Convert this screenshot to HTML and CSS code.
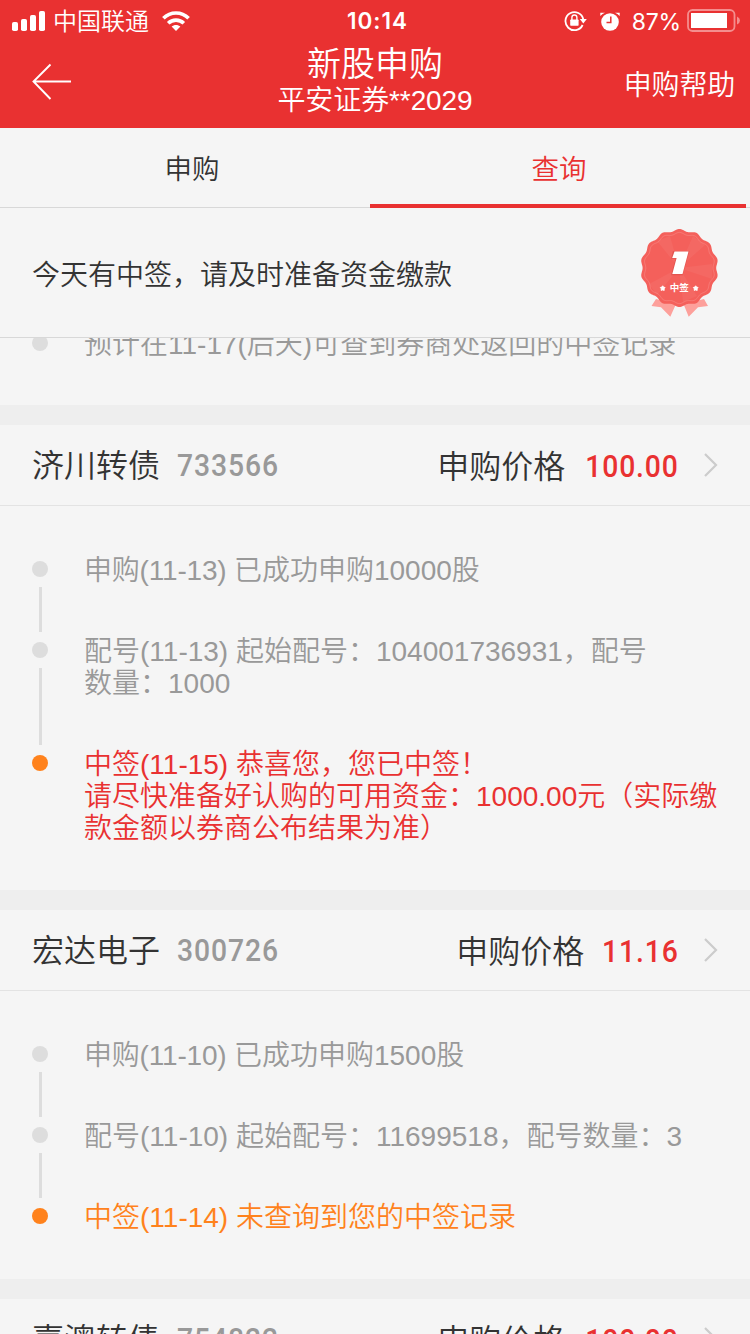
FILE: index.html
```html
<!DOCTYPE html>
<html lang="zh-CN">
<head>
<meta charset="utf-8">
<title>新股申购</title>
<link rel="stylesheet" href="styles.css">
</head>
<body>
<div class="screen">
  <header class="header">
    <div class="status">
      <div class="status-left">
        <svg class="signal" width="34" height="20" viewBox="0 0 34 20" fill="#fff"><rect x="0" y="11" width="6" height="9" rx="1.8"/><rect x="9" y="8" width="6" height="12" rx="1.8"/><rect x="18" y="4" width="6" height="16" rx="1.8"/><rect x="27" y="0" width="6" height="20" rx="1.8"/></svg>
        <span class="carrier">中国联通</span>
        <svg class="wifi" width="28" height="20" viewBox="0 0 28 20" fill="none" stroke="#fff" stroke-width="3.7"><path d="M1.4 7.3C8.5.2 19.500.2 26.600 7.300"/><path d="M6.200 12.200C10.500 8 17.500 8 21.800 12.200"/><path d="M14 20l-4.400-4.400C12 13.300 16 13.300 18.400 15.600z" fill="#fff" stroke="none"/></svg>
      </div>
      <span class="time">10:14</span>
      <div class="status-right">
        <svg class="lock" width="24" height="22" viewBox="0 0 24 22"><path d="M18.600 15A9 9 0 1 1 19.300 9.500" fill="none" stroke="#fff" stroke-width="1.800"/><path d="M15.800 9h7l-3.500 4.500z" fill="#fff"/><rect x="6.200" y="9.500" width="8.400" height="6.200" rx=".7" fill="#fff"/><path d="M7.900 10V7.500a2.500 2.500 0 0 1 5 0V10" fill="none" stroke="#fff" stroke-width="1.400"/></svg>
        <svg class="alarm" width="20" height="20" viewBox="0 0 20 20"><circle cx="10" cy="11" r="8.800" fill="#fff"/><path d="M.3 5V1.800H5Q2.500 2.800.3 5zM19.700 5V1.800H15Q17.500 2.800 19.700 5z" fill="#fff"/><path d="M10.800 5.500v6H6.500" fill="none" stroke="#e93131" stroke-width="1.500"/></svg>
        <span class="percent">87%</span>
        <svg class="battery" width="54" height="24" viewBox="0 0 54 24"><rect x="1" y="1" width="46.500" height="21" rx="4.500" fill="none" stroke="#f48e8e" stroke-width="1.800"/><rect x="4" y="4" width="36" height="15" fill="#fff"/><path d="M50 7.500q3 1.500 3 4t-3 4z" fill="#f48e8e"/></svg>
      </div>
    </div>
    <div class="navbar">
      <svg class="back" width="40" height="38" viewBox="0 0 40 38" fill="none" stroke="#fff" stroke-width="1.900"><path d="M18.500 1.500L1.500 18.500l17 17.500M1.500 18.500H39"/></svg>
      <div class="titles">
        <div class="title">新股申购</div>
        <div class="account">平安证券**2029</div>
      </div>
      <div class="help">申购帮助</div>
    </div>
  </header>

  <nav class="tabs">
    <div class="tab">申购</div>
    <div class="tab tab-active">查询</div>
  </nav>

  <section class="notice">
    <span class="notice-text">今天有中签，请及时准备资金缴款</span>
    <svg class="badge" width="80" height="90" viewBox="0 0 80 90">
      <path d="M17 71L12.500 78l9.500 1.300 9.300 9.400L37 76zM65 71l4 7-10 1.300-9.300 9.400L44.500 76z" fill="#fda09b"/>
      <path id="badge-edge" fill="#f4605b"/>
      <path id="badge-ring" fill="none" stroke="#f7827d" stroke-width=".8"/>
      <g fill="#fff" opacity=".05"><path d="M40 40L18 13l13-5zM40 40l14-32 12 9zM40 40l33-4v15zM40 40l18 28-14 6zM40 40L18 67 10 56z"/></g>
      <path d="M34.500 23.700H49.500L43 46.500H33L37.500 30H33z" fill="#d94b48" stroke="#d94b48" stroke-width="1.500" opacity=".6"/>
      <path d="M35.500 23.500H49.500L43.500 46H33.300L37.600 30H33.200z" fill="#fff"/>
      <text class="badge-label" x="40.300" y="63.400" text-anchor="middle">中签</text>
      <path id="star" d="M23.700 57.800l.8 1.300 1.600.4-1 1.300.1 1.600-1.500-.5-1.500.5.1-1.600-1-1.300 1.600-.4z" fill="#fff" stroke="#fff" stroke-width=".9"/>
      <use href="#star" x="33"/>
    </svg>
  </section>

  <main class="list">
    <section class="card card-first">
      <div class="step"><div class="rail"><i class="dot"></i></div><p class="text">预计在11-17(后天)可查到券商处返回的中签记录</p></div>
    </section>

    <section class="card">
      <div class="head"><span class="name">济川转债</span><span class="code">733566</span><span class="label">申购价格</span><span class="price">100.00</span><svg class="chevron" width="14" height="24" viewBox="0 0 14 24"><path d="M1 1l11 11L1 23"/></svg></div>
      <div class="steps">
        <div class="step"><div class="rail"><i class="dot"></i><i class="line"></i></div><p class="text"><span class="tight">申购(11-13) </span>已成功申购10000股</p></div>
        <div class="step"><div class="rail"><i class="dot"></i><i class="line"></i></div><p class="text">配号(11-13) 起始配号：104001736931，配号<br>数量：1000</p></div>
        <div class="step won"><div class="rail"><i class="dot"></i></div><p class="text">中签(11-15) 恭喜您，您已中签！<br>请尽快准备好认购的可用资金：1000.00元（实际缴<br>款金额以券商公布结果为准）</p></div>
      </div>
    </section>

    <section class="card">
      <div class="head"><span class="name">宏达电子</span><span class="code">300726</span><span class="label">申购价格</span><span class="price">11.16</span><svg class="chevron" width="14" height="24" viewBox="0 0 14 24"><path d="M1 1l11 11L1 23"/></svg></div>
      <div class="steps">
        <div class="step"><div class="rail"><i class="dot"></i><i class="line"></i></div><p class="text"><span class="tight">申购(11-10) </span>已成功申购1500股</p></div>
        <div class="step"><div class="rail"><i class="dot"></i><i class="line"></i></div><p class="text">配号(11-10) 起始配号：11699518，配号数量：3</p></div>
        <div class="step missed"><div class="rail"><i class="dot"></i></div><p class="text">中签(11-14) 未查询到您的中签记录</p></div>
      </div>
    </section>

    <section class="card">
      <div class="head"><span class="name">嘉澳转债</span><span class="code">754822</span><span class="label">申购价格</span><span class="price">100.00</span><svg class="chevron" width="14" height="24" viewBox="0 0 14 24"><path d="M1 1l11 11L1 23"/></svg></div>
    </section>
  </main>
</div>
<script src="badge.js"></script>
</body>
</html>
```
FILE: styles.css
```css
* { box-sizing: border-box; }
body {
  margin: 0;
  background: #f5f5f5;
  font-family: "Liberation Sans", "Noto Sans CJK SC", sans-serif;
  color: #333;
}
.screen { width: 750px; height: 1334px; display: flex; flex-direction: column; overflow: hidden; }
svg { display: block; flex: none; }

.header { height: 128px; flex: none; background: #e93131; color: #fff; }
.status { height: 40px; display: grid; grid-template-columns: 1fr auto 1fr; align-items: center; padding: 0 10px 0 12px; }
.status-left, .status-right { display: flex; align-items: center; height: 40px; }
.status-right { justify-content: flex-end; }
.carrier { font-size: 24px; font-weight: 350; line-height: 38px; margin-left: 7px; padding-top: 2px; }
.wifi { margin-left: 13px; }
.time { font: 600 22.5px/40px Inter, sans-serif; letter-spacing: 1px; padding: 1px 0 0 3px; }
.percent { font: 400 23px/38px Inter, sans-serif; margin: 0 6px 0 12px; letter-spacing: -.2px; padding-top: 2px; }
.lock { margin-right: 12px; }
.battery { margin-top: 1px; margin-right: -1px; }

.navbar { height: 88px; display: grid; grid-template-columns: 1fr auto 1fr; align-items: center; padding: 0 15px 0 32px; }
.back { margin-bottom: 4px; }
.titles { text-align: center; margin: -5px 0 0 -17px; }
.title { font-size: 34px; line-height: 39px; font-weight: 350; }
.account { font-size: 28px; line-height: 34px; font-weight: 350; letter-spacing: -.1px; }
.help { justify-self: end; font-size: 28px; line-height: 40px; font-weight: 350; letter-spacing: -.2px; padding-top: 3px; }

.tabs { height: 80px; flex: none; display: flex; border-bottom: 1px solid #d8d8d8; }
.tab { width: 376px; height: 80px; line-height: 84px; font-size: 27.500px; font-weight: 350; text-align: center; }
.tab:first-child { width: 370px; padding-left: 14px; }
.tab-active { color: #e93131; border-bottom: 4px solid #e93131; padding-left: 2px; }

.notice { height: 130px; flex: none; display: flex; justify-content: space-between; align-items: center; padding: 0 31px 0 32px; border-bottom: 1px solid #d8d8d8; }
.notice-text { font-size: 28px; font-weight: 350; }
.badge-label { font: 700 9.500px "Noto Sans CJK SC", sans-serif; fill: #fff; }

.list { flex: 1; min-height: 0; overflow: hidden; }
.card { border-top: 20px solid #eee; }
.card-first { border-top: 0; margin-top: -11px; padding: 0 32px 46px; }
.head { height: 81px; display: flex; align-items: center; padding: 0 32px; border-bottom: 1px solid #e3e3e3; font-size: 32px; line-height: 78px; font-weight: 350; }
.name { padding-top: 2px; }
.code, .price { font-family: Roboto, sans-serif; font-weight: 500; letter-spacing: 1px; transform: scaleX(.885); }
.code { color: #999; margin-left: 17px; transform-origin: left; }
.label { margin-left: auto; padding-top: 3px; }
.price { color: #e93131; margin-left: 8px; transform-origin: right; padding-top: 1px; }
.chevron { margin-left: 25px; fill: none; stroke: #ccc; stroke-width: 2.2px; }
.steps { padding: 47px 0 47px 32px; }
.step { display: flex; gap: 36px; }
.rail { width: 16px; flex: none; display: flex; flex-direction: column; align-items: center; padding: 8px 0 2px; }
.dot { width: 16px; height: 16px; flex: none; border-radius: 50%; background: #ddd; }
.line { width: 3px; flex: 1; margin-top: 10px; background: #ddd; }
.text { margin: 0; padding: 2px 0 47px; font-size: 28px; line-height: 32px; color: #999; font-weight: 350; white-space: nowrap; }
.step:last-child .text { padding-bottom: 0; margin-bottom: -2px; }
.tight { letter-spacing: -.2px; }
.won .text { color: #e93131; }
.missed .text { color: #ff821c; }
.won .dot, .missed .dot { background: #ff821c; }
```
FILE: badge.js
```js
// Scalloped outlines of the medal.
function scallop(radius, depth) {
  const points = [];
  for (let i = 0; i < 280; i++) {
    const a = i / 280 * Math.PI * 2;
    const r = radius + depth * Math.cos(14 * a);
    points.push((40.4 + r * Math.sin(a)).toFixed(2) + " " + (40 - r * Math.cos(a)).toFixed(2));
  }
  return "M" + points.join("L") + "Z";
}
document.getElementById("badge-edge").setAttribute("d", scallop(37.9, 1.1));
document.getElementById("badge-ring").setAttribute("d", scallop(34.6, 1));
```
